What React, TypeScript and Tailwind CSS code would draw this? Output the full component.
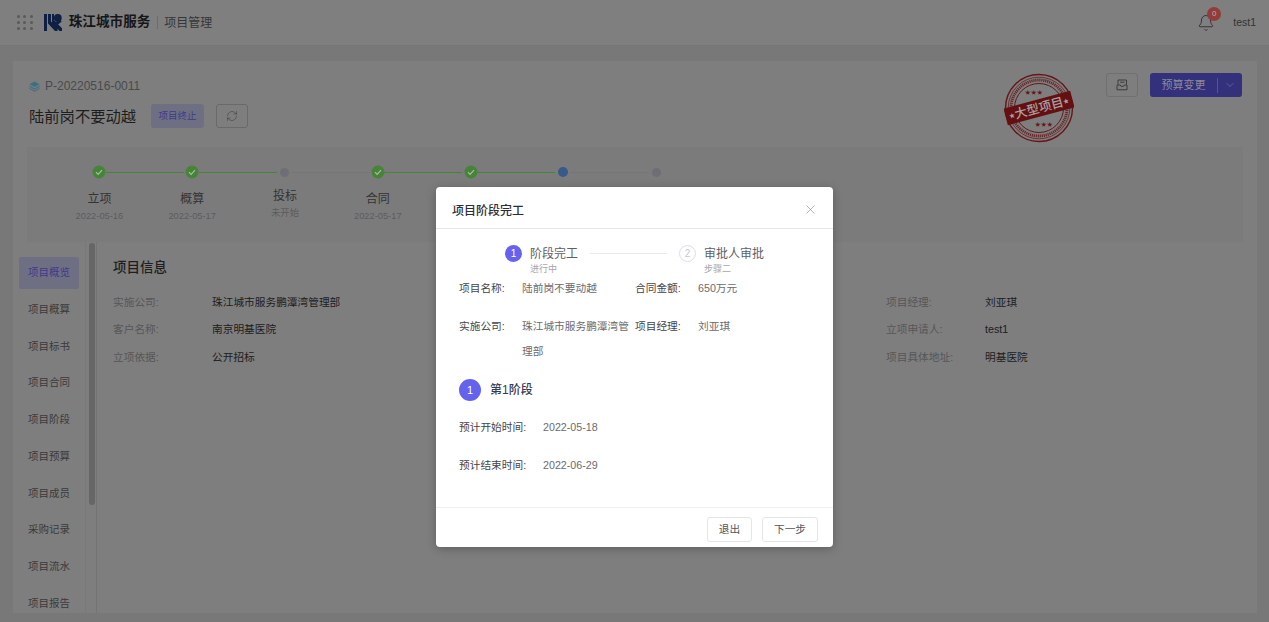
import { Bell, ChevronDown, RefreshCw, X } from 'lucide-react';

const font = { fontFamily: '"Liberation Sans", "Noto Sans CJK SC", sans-serif' };

// the last three stages sit behind the dialog, only their dots matter
const stages = [
  { name: '立项', date: '2022-05-16', state: 'done' },
  { name: '概算', date: '2022-05-17', state: 'done' },
  { name: '投标', date: '未开始', state: 'idle' },
  { name: '合同', date: '2022-05-17', state: 'done' },
  { name: '', date: '', state: 'done' },
  { name: '', date: '', state: 'active' },
  { name: '', date: '', state: 'idle' },
];

const menu = ['项目概览', '项目概算', '项目标书', '项目合同', '项目阶段', '项目预算', '项目成员', '采购记录', '项目流水', '项目报告'];

function Check() {
  return (
    <svg viewBox="0 0 14 14" className="w-[14px] h-[14px]">
      <circle cx="7" cy="7" r="6.5" fill="#468438" />
      <path d="M4 7.2l2.1 2.1L10 5.2" fill="none" stroke="#a9bda4" strokeWidth="1.2" />
    </svg>
  );
}

function Stage({ name, date, state, last }: { name: string; date: string; state: string; last: boolean }) {
  const idle = state === 'idle';
  return (
    <div className="w-[92.8px] shrink-0 flex flex-col items-center relative">
      {!last && (
        <div className={`absolute top-[6.5px] left-[53px] w-[78px] h-px ${state === 'done' ? 'bg-[#468438]' : 'bg-[#757577]'}`} />
      )}
      <div className="h-[14px] flex items-center justify-center">
        {state === 'done' && <Check />}
        {state === 'active' && <div className="w-[10px] h-[10px] rounded-full bg-[#365a8a]" />}
        {idle && <div className="w-[9px] h-[9px] rounded-full bg-[#6e6e76]" />}
      </div>
      {name && (
        <>
          <div className={`text-[12px] leading-[16px] text-[#333335] ${idle ? 'mt-[9px]' : 'mt-[12px]'}`}>{name}</div>
          <div className="text-[9.3px] leading-[12px] text-[#5c5c5e] mt-[3px]">{date}</div>
        </>
      )}
    </div>
  );
}

function Stamp() {
  return (
    <svg viewBox="0 0 70 70" className="absolute left-[991px] top-[12px] w-[70px] h-[70px]">
      <g fill="none" stroke="#651618">
        <circle cx="35" cy="35" r="33.5" strokeWidth="1.4" />
        <circle cx="35" cy="35" r="30.8" strokeWidth="0.7" />
        <circle cx="35" cy="35" r="28" strokeWidth="2.8" strokeDasharray="1.2 0.8" opacity="0.85" />
        <circle cx="35" cy="35" r="24.5" strokeWidth="1" />
      </g>
      <g transform="rotate(-15 35 35)">
        <rect x="0.5" y="26.5" width="69" height="17" fill="#641012" />
        <text x="35" y="39.5" textAnchor="middle" fontSize="12.5" fontWeight="500" fill="#a8a0a0" style={{ fontFamily: '"Noto Sans CJK SC", serif' }}>
          大型项目
        </text>
        <text x="4" y="37.5" fontSize="6" fill="#a8a0a0">★</text>
        <text x="60" y="37.5" fontSize="6" fill="#a8a0a0">★</text>
      </g>
      <text x="30" y="21" textAnchor="middle" fontSize="5.5" fill="#651618" letterSpacing="0.5">★★★</text>
      <text x="40" y="53" textAnchor="middle" fontSize="5.5" fill="#651618" letterSpacing="0.5">★★★</text>
    </svg>
  );
}

function Logo() {
  return (
    <svg viewBox="0 0 18 17" className="w-[18px] h-[17px]">
      <path d="M0 0h3v17H0zM4 0h3v7.5L13.5 14.2V17H11L4 9.5zM8 0h2v6.2L18 14.2V17h-2.5L8 8.5z" fill="#101f44" />
      <circle cx="13.8" cy="4" r="3.9" fill="#101f44" />
      <path d="M10.5 8.700l5.500-2.200 1.800 1-4.600 3.800z" fill="#101f44" />
    </svg>
  );
}

function Info({ label, value }: { label: string; value: string }) {
  return (
    <div className="flex items-center h-[27.5px] text-[10.7px]">
      <span className="w-[99px] text-[#565658]">{label}</span>
      <span className="text-[#1c1c1e]">{value}</span>
    </div>
  );
}

function Field({ label, value }: { label: string; value: string }) {
  return (
    <div className="flex w-[176px] text-[10.7px] leading-[25px]">
      <span className="w-[63px] shrink-0 text-[#454548]">{label}</span>
      <span className="w-[110px] text-[#6b6b6f]">{value}</span>
    </div>
  );
}

export default function App() {
  return (
    <div style={font} className="relative h-[622px] w-[1269px] overflow-hidden bg-[#787879]">
      <header className="h-[46px] bg-[#7f7f7f] border-b border-[#767677] flex items-center pl-[17px] pr-[13px]">
        <div className="grid grid-cols-3 gap-x-[3.4px] gap-y-[3.4px]">
          {Array.from({ length: 9 }).map((_, i) => (
            <span key={i} className="w-[3px] h-[3px] rounded-full bg-[#5a5a5c]" />
          ))}
        </div>
        <div className="ml-[11px]"><Logo /></div>
        <span className="ml-[7px] text-[13.6px] font-bold text-[#161618]">珠江城市服务</span>
        <span className="ml-[7px] w-px h-[13px] bg-[#6c6c6e]" />
        <span className="ml-[6px] text-[12px] text-[#363638]">项目管理</span>
        <div className="ml-auto relative mr-[18px]">
          <Bell size={18} strokeWidth={1.2} className="text-[#2e2e30]" />
          <span className="absolute -top-[7px] left-[10px] w-[14px] h-[14px] rounded-full bg-[#933c3c] text-[8px] leading-[14px] text-center text-[#b0b0b0]">0</span>
        </div>
        <span className="text-[10.5px] text-[#333335]">test1</span>
      </header>

      <main className="ml-[13px] mt-[15px] w-[1244px] h-[552px] bg-[#7e7e7e] flex flex-col relative">
        <Stamp />
        <div className="h-[86px] pl-[16px] pr-[15px] flex justify-between shrink-0">
          <div>
            <div className="flex items-center gap-[5px] h-[14px] mt-[18px]">
              <svg viewBox="0 0 12 12" className="w-[11px] h-[11px]">
                <path d="M6 .5l5.5 3L6 6.5.5 3.5z" fill="#3c6f86" />
                <path d="M.5 5.8L6 8.7l5.5-2.900M.5 8L6 11l5.5-3" fill="none" stroke="#3c6f86" strokeWidth="1.1" />
              </svg>
              <span className="text-[12px] text-[#4a4a4c]">P-20220516-0011</span>
            </div>
            <div className="flex items-center mt-[11px]">
              <span className="text-[15.3px] text-[#1e1e20] w-[122px] pt-[2px]">陆前岗不要动越</span>
              <span className="w-[53px] h-[24px] rounded-[3px] bg-[#6f6f84] text-[9.5px] leading-[24px] text-center text-[#3d3b88]">项目终止</span>
              <span className="ml-[12px] w-[32px] h-[24px] rounded-[3px] border border-[#6a6a6c] flex items-center justify-center">
                <RefreshCw size={12} strokeWidth={1.1} className="text-[#3c3c3e]" />
              </span>
            </div>
          </div>
          <div className="flex gap-[12px] mt-[12px] h-[24px]">
            <span className="w-[32px] rounded-[3px] border border-[#707072] flex items-center justify-center">
              <svg viewBox="0 0 12 12" className="w-[12px] h-[12px]" fill="none" stroke="#363638" strokeWidth="0.9">
                <path d="M2 5.500V1h8.500v4.500M1 6h3.200l.8 1.300h2.500L8.300 6h2.700v4.800H1zM4 3.200h4.500" />
              </svg>
            </span>
            <span className="w-[92px] rounded-[3px] bg-[#33307c] flex items-center text-[#8a8a9a]">
              <span className="w-[67px] text-[11px] text-center">预算变更</span>
              <span className="w-px h-[15px] bg-[#57558f]" />
              <span className="flex-1 flex justify-center"><ChevronDown size={12} strokeWidth={1.1} /></span>
            </span>
          </div>
        </div>

        <div className="mx-[14px] h-[95px] bg-[#7b7b7c] shrink-0 flex pl-[26px] pt-[18px]">
          {stages.map((s, i) => (
            <Stage key={i} name={s.name} date={s.date} state={s.state} last={i === stages.length - 1} />
          ))}
        </div>

        <div className="flex flex-1 min-h-0 overflow-hidden">
          <div className="w-[73px] shrink-0 border-r border-[#787879] pl-[6px] pt-[15.4px]">
            {menu.map((m, i) => (
              <div key={m} className="h-[36.7px]">
                <div className={`w-[60px] h-[32px] rounded-[2px] pl-[9px] text-[10.5px] leading-[31px] ${i === 0 ? 'bg-[#6f6f84] text-[#3d3b88]' : 'text-[#3a3a3c]'}`}>
                  {m}
                </div>
              </div>
            ))}
          </div>
          <div className="w-[11px] shrink-0 border-r border-[#747475] pl-[3px] pt-px">
            <div className="w-[6px] h-[262px] rounded-[3px] bg-[#666667]" />
          </div>
          <div className="flex-1 pl-[16px] pt-[16px]">
            <h2 className="text-[13.5px] leading-[20px] font-medium text-[#1e1e20]">项目信息</h2>
            <div className="flex mt-[10px]">
              <div className="w-[773px]">
                <Info label="实施公司:" value="珠江城市服务鹏潭湾管理部" />
                <Info label="客户名称:" value="南京明基医院" />
                <Info label="立项依据:" value="公开招标" />
              </div>
              <div>
                <Info label="项目经理:" value="刘亚琪" />
                <Info label="立项申请人:" value="test1" />
                <Info label="项目具体地址:" value="明基医院" />
              </div>
            </div>
          </div>
        </div>
      </main>

      <div className="absolute inset-0 flex justify-center items-start pt-[187px]">
        <div className="w-[397px] h-[360px] bg-white rounded-[4px] shadow-[0_2px_10px_rgba(0,0,0,0.25)] flex flex-col">
          <div className="h-[42px] border-b border-[#e4e5ea] flex justify-between pl-[16px] pr-[15px] shrink-0">
            <span className="mt-[15px] text-[12px] leading-[18px] font-medium text-[#2d2d33]">项目阶段完工</span>
            <X size={15} strokeWidth={1} className="text-[#85858a] mt-[15px]" />
          </div>

          <div className="flex-1 pl-[23px] pr-[15px]">
            <div className="flex items-start ml-[46px] mt-[16px] h-[32px]">
              <span className="w-[17px] h-[17px] rounded-full bg-[#6563ee] text-white text-[10px] leading-[17px] text-center">1</span>
              <div className="ml-[8px] mt-[1px]">
                <div className="text-[12px] leading-[17px] text-[#5e5e66]">阶段完工</div>
                <div className="text-[9px] leading-[13px] text-[#a5a5ad]">进行中</div>
              </div>
              <span className="ml-[12px] mt-[8px] w-[77px] h-px bg-[#e8e8ee]" />
              <span className="ml-[12px] w-[17px] h-[17px] rounded-full border border-[#dcdcee] text-[#c8c8d6] text-[10px] leading-[15px] text-center">2</span>
              <div className="ml-[8px] mt-[1px]">
                <div className="text-[12px] leading-[17px] text-[#5e5e66]">审批人审批</div>
                <div className="text-[9px] leading-[13px] text-[#a5a5ad]">步骤二</div>
              </div>
            </div>

            <div className="flex mt-[-1px]"><Field label="项目名称:" value="陆前岗不要动越" /><Field label="合同金额:" value="650万元" /></div>
            <div className="flex mt-[13px]"><Field label="实施公司:" value="珠江城市服务鹏潭湾管理部" /><Field label="项目经理:" value="刘亚琪" /></div>

            <div className="flex items-center mt-[15px]">
              <span className="w-[22px] h-[22px] rounded-full bg-[#6563ee] text-white text-[11px] leading-[22px] text-center">1</span>
              <span className="ml-[9px] text-[12px] font-medium text-[#3a3a52]">第1阶段</span>
            </div>

            <div className="flex mt-[14px] text-[10.7px] leading-[25px]">
              <span className="w-[84px] text-[#454548]">预计开始时间:</span>
              <span className="text-[#6b6b6f]">2022-05-18</span>
            </div>
            <div className="flex mt-[13px] text-[10.7px] leading-[25px]">
              <span className="w-[84px] text-[#454548]">预计结束时间:</span>
              <span className="text-[#6b6b6f]">2022-06-29</span>
            </div>
          </div>

          <div className="h-[40px] border-t border-[#eeeef3] flex justify-end items-start pt-[9px] gap-[10px] pr-[15px] shrink-0">
            <span className="w-[45px] h-[25px] rounded-[3px] border border-[#e4e5ea] text-[10.7px] leading-[23px] text-center text-[#55555a]">退出</span>
            <span className="w-[56px] h-[25px] rounded-[3px] border border-[#e4e5ea] text-[10.7px] leading-[23px] text-center text-[#55555a]">下一步</span>
          </div>
        </div>
      </div>
    </div>
  );
}
